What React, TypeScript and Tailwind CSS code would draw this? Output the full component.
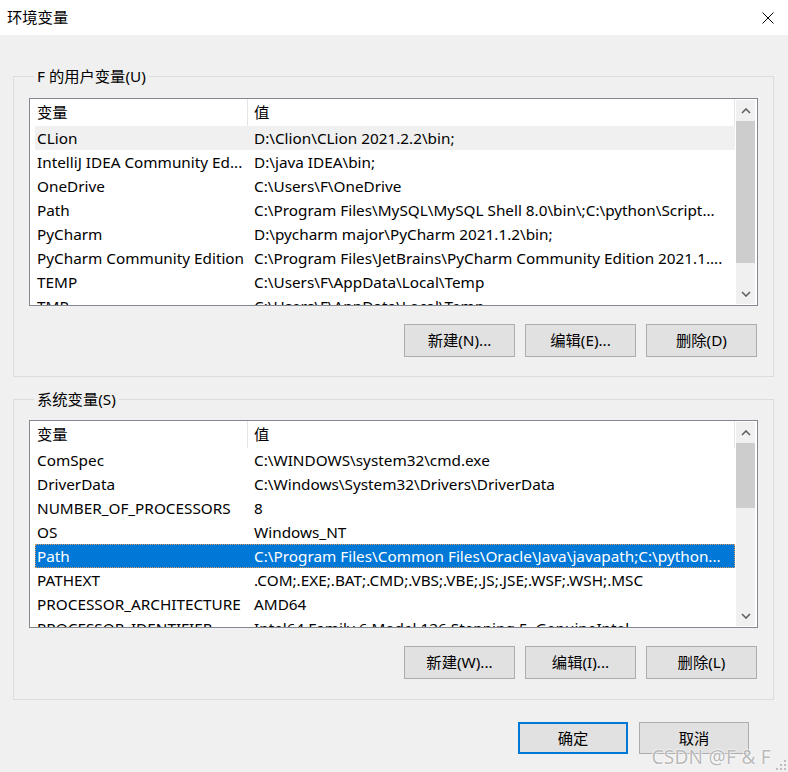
import React from "react";

type Row = {
  name: string;
  value: string;
};

const userVars: Row[] = [
  { name: "CLion", value: "D:\\Clion\\CLion 2021.2.2\\bin;" },
  { name: "IntelliJ IDEA Community Ed...", value: "D:\\java IDEA\\bin;" },
  { name: "OneDrive", value: "C:\\Users\\F\\OneDrive" },
  { name: "Path", value: "C:\\Program Files\\MySQL\\MySQL Shell 8.0\\bin\\;C:\\python\\Script..." },
  { name: "PyCharm", value: "D:\\pycharm major\\PyCharm 2021.1.2\\bin;" },
  { name: "PyCharm Community Edition", value: "C:\\Program Files\\JetBrains\\PyCharm Community Edition 2021.1...." },
  { name: "TEMP", value: "C:\\Users\\F\\AppData\\Local\\Temp" },
  { name: "TMP", value: "C:\\Users\\F\\AppData\\Local\\Temp" },
];

const systemVars: Row[] = [
  { name: "ComSpec", value: "C:\\WINDOWS\\system32\\cmd.exe" },
  { name: "DriverData", value: "C:\\Windows\\System32\\Drivers\\DriverData" },
  { name: "NUMBER_OF_PROCESSORS", value: "8" },
  { name: "OS", value: "Windows_NT" },
  { name: "Path", value: "C:\\Program Files\\Common Files\\Oracle\\Java\\javapath;C:\\python..." },
  { name: "PATHEXT", value: ".COM;.EXE;.BAT;.CMD;.VBS;.VBE;.JS;.JSE;.WSF;.WSH;.MSC" },
  { name: "PROCESSOR_ARCHITECTURE", value: "AMD64" },
  { name: "PROCESSOR_IDENTIFIER", value: "Intel64 Family 6 Model 126 Stepping 5, GenuineIntel" },
];

function Chevron({ up }: { up?: boolean }) {
  return (
    <svg width="10" height="6" viewBox="0 0 10 6" className="block">
      <path
        d={up ? "M1 5 L5 1 L9 5" : "M1 1 L5 5 L9 1"}
        fill="none"
        stroke="#606060"
        strokeWidth="1.6"
      />
    </svg>
  );
}

function ListView({
  rows,
  selected,
  hover,
  thumb,
}: {
  rows: Row[];
  selected?: number;
  hover?: number;
  thumb: string;
}) {
  return (
    <div className="flex h-[208px] border border-[#828790] bg-white">
      <div className="flex w-[705px] flex-col overflow-hidden">
        <div className="flex h-[27px] shrink-0 items-center">
          <div className="w-[217px] pl-[7px]">变量</div>
          <div className="h-full w-px bg-[#e5e5e5]" />
          <div className="flex-1 pl-[6px]">值</div>
          <div className="h-full w-px bg-[#e5e5e5]" />
        </div>
        <div className="pl-[5px]">
          {rows.map((r, i) => (
            <div
              key={r.name}
              className={
                i === selected
                  ? "flex h-[24px] items-center border border-dotted border-[#d89a5a] bg-[#0078d7] text-white"
                  : i === hover
                  ? "flex h-[24px] items-center border border-transparent bg-[#f0f0f0]"
                  : "flex h-[24px] items-center border border-transparent"
              }
            >
              <div className="w-[211px] overflow-hidden whitespace-nowrap pl-[1px]">
                {r.name}
              </div>
              <div className="flex-1 overflow-hidden whitespace-nowrap pl-[7px]">
                {r.value}
              </div>
            </div>
          ))}
        </div>
      </div>
      <div className="w-[22px] py-[1px] pl-[1px] pr-[2px]">
        <div className="flex h-full flex-col bg-[#f0f0f0]">
          <div className="flex h-[21px] shrink-0 items-center justify-center">
            <Chevron up />
          </div>
          <div className={thumb} />
          <div className="flex-1" />
          <div className="flex h-[20px] shrink-0 items-center justify-center">
            <Chevron />
          </div>
        </div>
      </div>
    </div>
  );
}

function Button({ label, primary }: { label: string; primary?: boolean }) {
  return (
    <button
      className={
        primary
          ? "h-[32px] w-[110px] border-2 border-[#0078d7] bg-[#e1e1e1]"
          : "h-[32px] w-[110px] border border-[#adadad] bg-[#e1e1e1]"
      }
    >
      {label}
    </button>
  );
}

function ActionButtons({ labels }: { labels: string[] }) {
  return (
    <div className="mt-[18px] flex justify-end gap-[10px] pr-[1px]">
      {labels.map((l) => (
        <button
          key={l}
          className="h-[33px] w-[111px] border border-[#adadad] bg-[#e1e1e1]"
        >
          {l}
        </button>
      ))}
    </div>
  );
}

function GroupBox({
  title,
  children,
  className,
}: {
  title: string;
  children: React.ReactNode;
  className: string;
}) {
  return (
    <div className={className}>
      <div className="-mt-[11px] ml-[5px] w-fit bg-[#f0f0f0] px-[3px] leading-[20px]">
        {title}
      </div>
      {children}
    </div>
  );
}

export default function App() {
  return (
    <div className="relative h-[772px] w-[788px] overflow-hidden bg-[#f0f0f0] font-['Noto_Sans','Noto_Sans_CJK_SC',sans-serif] text-[15.3px] text-black">
      <div className="flex h-[35px] items-center justify-between bg-white pl-[7px] pr-[14px]">
        <span>环境变量</span>
        <svg width="12" height="12" viewBox="0 0 12 12">
          <path d="M0.5 0.5 L11.5 11.5 M11.5 0.5 L0.5 11.5" stroke="#000" strokeWidth="1" />
        </svg>
      </div>

      <div className="pl-[13px] pr-[14px] pt-[41px]">
        <GroupBox
          title="F 的用户变量(U)"
          className="border border-[#dcdcdc] px-[15px] pb-[19px]"
        >
          <div className="mt-[12px]">
            <ListView rows={userVars} hover={0} thumb="h-[142px] shrink-0 bg-[#cdcdcd]" />
          </div>
          <ActionButtons labels={["新建(N)...", "编辑(E)...", "删除(D)"]} />
        </GroupBox>

        <GroupBox
          title="系统变量(S)"
          className="mt-[22px] border border-[#dcdcdc] px-[15px] pb-[20px]"
        >
          <div className="mt-[11px]">
            <ListView rows={systemVars} selected={4} thumb="h-[65px] shrink-0 bg-[#cdcdcd]" />
          </div>
          <ActionButtons labels={["新建(W)...", "编辑(I)...", "删除(L)"]} />
        </GroupBox>

        <div className="mt-[22px] flex justify-end gap-[11px] pr-[25px]">
          <Button label="确定" primary />
          <Button label="取消" />
        </div>
      </div>

      <div className="absolute bottom-[5px] right-[17px] text-[19px] leading-none tracking-[0.3px] text-[#a8a8a8]/80 [text-shadow:0_0_2px_#fff,0_0_2px_#fff]">
        CSDN @F &amp; F
      </div>

      <svg className="absolute bottom-0 right-0" width="13" height="13" viewBox="0 0 13 13">
        <rect x="9" y="1" width="2" height="2" fill="#bcbcbc" />
        <rect x="5" y="5" width="2" height="2" fill="#bcbcbc" />
        <rect x="9" y="5" width="2" height="2" fill="#bcbcbc" />
        <rect x="1" y="9" width="2" height="2" fill="#bcbcbc" />
        <rect x="5" y="9" width="2" height="2" fill="#bcbcbc" />
        <rect x="9" y="9" width="2" height="2" fill="#bcbcbc" />
      </svg>
    </div>
  );
}
